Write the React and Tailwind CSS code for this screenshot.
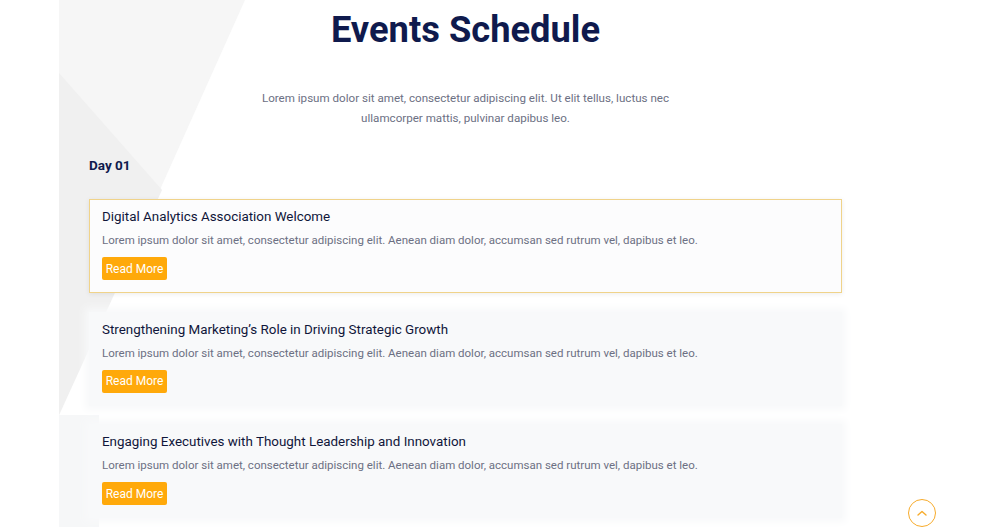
import React from "react";

const events = [
  { title: "Digital Analytics Association Welcome", active: true },
  { title: "Strengthening Marketing’s Role in Driving Strategic Growth" },
  { title: "Engaging Executives with Thought Leadership and Innovation" },
];

const desc =
  "Lorem ipsum dolor sit amet, consectetur adipiscing elit. Aenean diam dolor, accumsan sed rutrum vel, dapibus et leo.";

function EventCard({ title, active }) {
  return (
    <div
      className={
        active
          ? "h-[94px] border border-[#f0d38a] bg-[#fcfcfd] px-[12px] pt-[8px] shadow-[0_1px_5px_rgba(0,0,0,0.08)]"
          : "h-[94px] bg-[#f8f9fa] px-[13px] pt-[9px] shadow-[0_0_8px_4px_#f8f9fa]"
      }
    >
      <h3 className="text-[13.4px] leading-[18px] font-normal text-[#10163a]">{title}</h3>
      <p className="mt-[6px] text-[11.5px] leading-[16px] text-[#6c7083]">{desc}</p>
      <button className="mt-[9px] h-[23px] w-[65px] rounded-[2px] bg-[#ffa90a] text-[12px] text-white">
        Read More
      </button>
    </div>
  );
}

export default function App() {
  return (
    <div
      className="flex h-[527px] w-[1000px] overflow-hidden bg-white"
      style={{ fontFamily: "Roboto, 'Noto Sans', sans-serif" }}
    >
      <div className="w-[59px] shrink-0 bg-white" />
      <div className="relative flex-1">
        {/* decorative background shapes */}
        <svg className="absolute left-0 top-0" width="941" height="527" viewBox="0 0 941 527">
          <rect x="0" y="0" width="941" height="527" fill="#ffffff" />
          <polygon points="0,0 186,0 0,415" fill="#f6f6f6" />
          <polygon points="0,73 103,190 0,415" fill="#f0f0f0" />
          <rect x="0" y="415" width="40" height="112" fill="#f6f7f8" />
        </svg>

        <div className="relative ml-[30px] w-[753px]">
          <h1 className="pt-[8px] text-center text-[36.3px] leading-[44px] font-bold text-[#0f1a4d]">
            Events Schedule
          </h1>
          <p className="mx-auto mt-[36px] w-[412px] text-center text-[11.6px] leading-[20px] text-[#6c7083]">
            Lorem ipsum dolor sit amet, consectetur adipiscing elit. Ut elit tellus, luctus nec
            ullamcorper mattis, pulvinar dapibus leo.
          </p>
          <h2 className="mt-[28px] text-[13.5px] leading-[18px] font-bold text-[#0f1a4d]">Day 01</h2>
          <div className="mt-[25px] flex flex-col gap-[18.5px]">
            {events.map((e) => (
              <EventCard key={e.title} {...e} />
            ))}
          </div>
        </div>

        {/* scroll to top */}
        <button className="absolute left-[849px] top-[499px] flex h-[28px] w-[28px] items-center justify-center rounded-full border-[1.5px] border-[#f7ab2b] bg-white">
          <svg width="10" height="6" viewBox="0 0 10 6" fill="none">
            <path d="M1 5 L5 1.5 L9 5" stroke="#f7ab2b" strokeWidth="1.4" strokeLinecap="round" strokeLinejoin="round" />
          </svg>
        </button>
      </div>
    </div>
  );
}
